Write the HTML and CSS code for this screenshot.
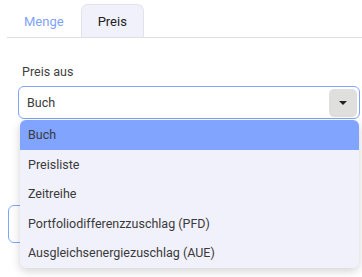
FILE: index.html
```html
<!DOCTYPE html>
<html lang="de">
<head>
    <meta charset="UTF-8">
    <title>Preis</title>
    <link rel="stylesheet" href="styles.css">
</head>
<body>
    <div class="tabs">
        <div class="tab">Menge</div>
        <div class="tab active">Preis</div>
    </div>

    <div class="panel">
        <label class="label">Preis aus</label>
        <div class="select">
            <span class="value">Buch</span>
            <span class="toggle"><span class="caret"></span></span>
            <ul class="menu">
                <li class="selected">Buch</li>
                <li>Preisliste</li>
                <li>Zeitreihe</li>
                <li>Portfoliodifferenzzuschlag (PFD)</li>
                <li>Ausgleichsenergiezuschlag (AUE)</li>
            </ul>
        </div>
        <div class="field"></div>
    </div>
</body>
</html>
```

FILE: styles.css
```css
html, body {
    height: 100%;
}

body {
    margin: 0;
    font-family: Roboto, "Noto Sans", sans-serif;
    font-size: 12.5px;
    color: #3a3a3a;
    background: #fff;
    overflow: hidden;
}

.tabs {
    display: flex;
    margin: 4px 0 0 7px;
    border-bottom: 1px solid #dedee4;
}

.tab {
    height: 33px;
    padding: 0 16px;
    display: flex;
    align-items: center;
    font-size: 13px;
    color: #7fa2fb;
    border: 1px solid transparent;
    border-bottom: none;
    border-radius: 7px 7px 0 0;
    box-sizing: border-box;
}

.tab.active {
    color: #222;
    background: #f0f1fb;
    border-color: #e2e3ea;
}

.panel {
    padding: 26px 2px 0 18px;
}

.label {
    display: block;
    margin: 0 0 7px 4px;
    color: #3f3f3f;
}

.select {
    position: relative;
    height: 33px;
    border: 1px solid #82a5fb;
    border-radius: 6px;
    box-sizing: border-box;
    display: flex;
    align-items: center;
    justify-content: space-between;
    padding: 0 2px 0 8px;
}

.toggle {
    width: 28px;
    height: 28px;
    background: #dfe0de;
    border-radius: 5px;
    display: flex;
    align-items: center;
    justify-content: center;
}

.caret {
    border-left: 4px solid transparent;
    border-right: 4px solid transparent;
    border-top: 4px solid #222;
}

.menu {
    position: absolute;
    top: 33px;
    left: 1px;
    right: 0;
    margin: 0;
    padding: 0;
    list-style: none;
    background: #f0f1fb;
    border-radius: 6px;
    box-shadow: 0 3px 10px rgba(0, 0, 0, 0.18);
    overflow: hidden;
    z-index: 2;
}

.menu li {
    height: 29.5px;
    line-height: 29.5px;
    padding-left: 8px;
}

.menu li.selected {
    background: #80a4ff;
}

.field {
    margin: 86px 8px 0 -10px;
    height: 36px;
    border: 1px solid #82a5fb;
    border-radius: 6px;
}
```
